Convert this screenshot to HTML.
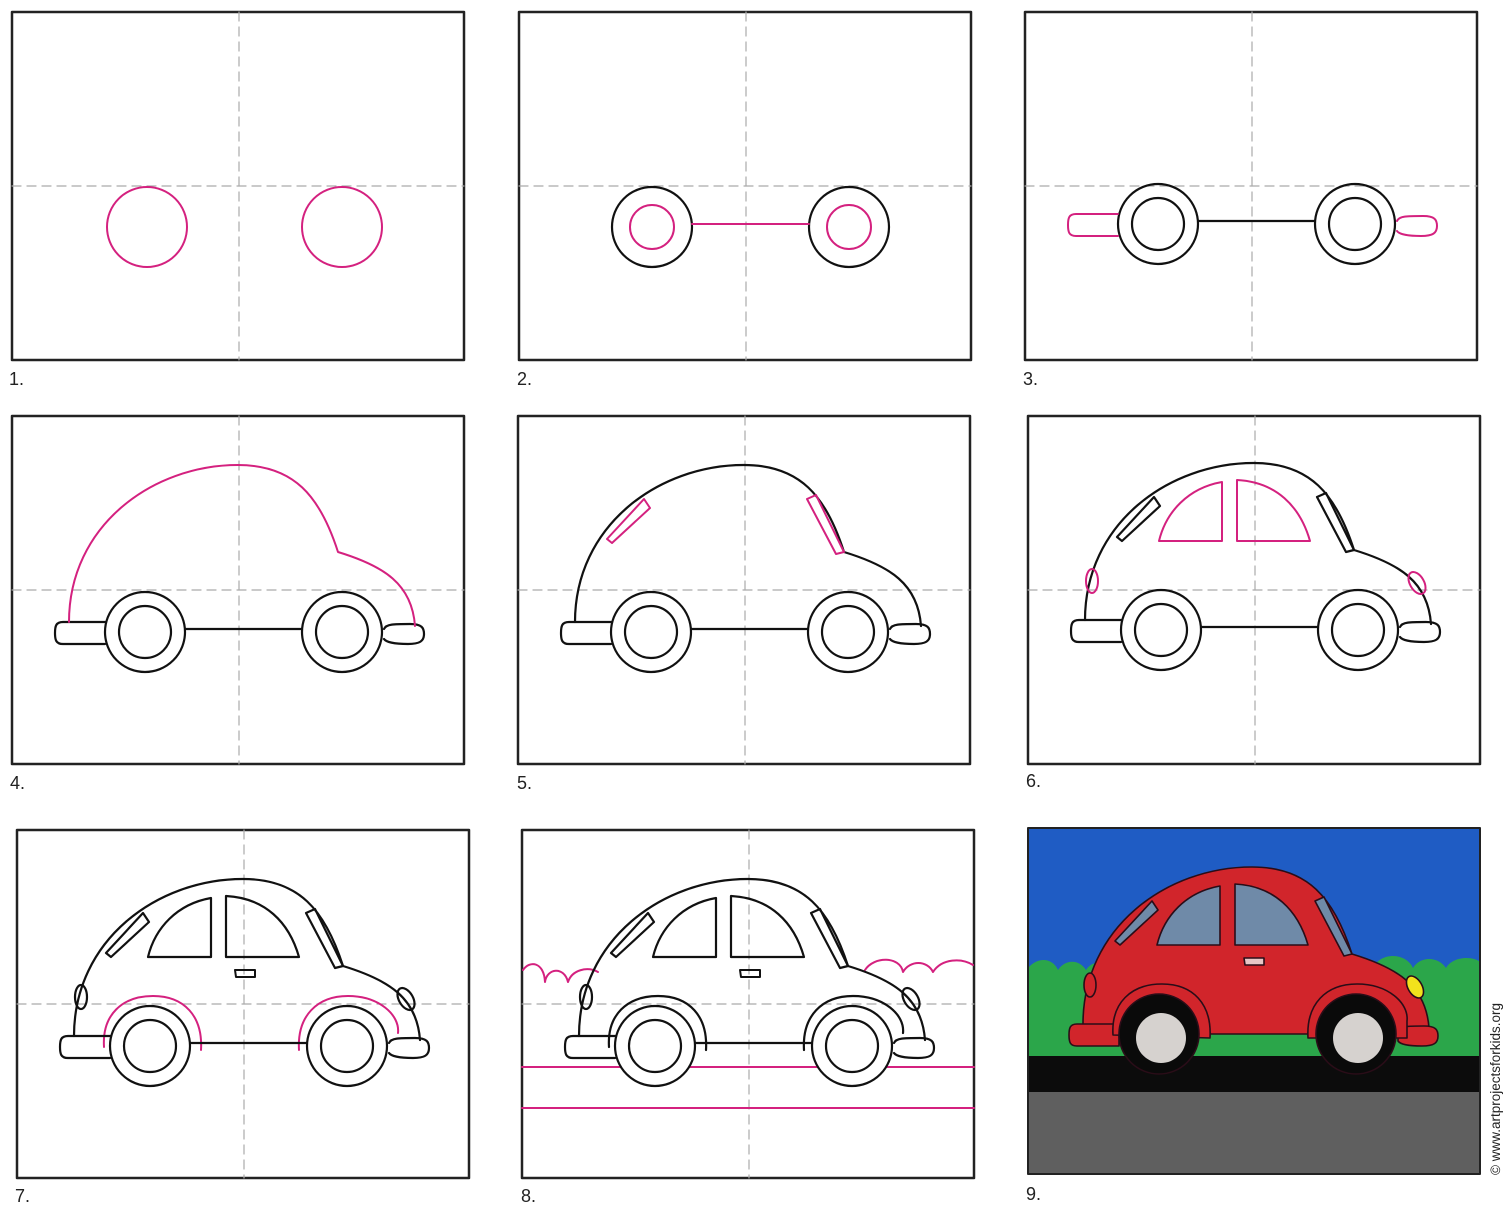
<!DOCTYPE html>
<html><head><meta charset="utf-8"><style>
html,body{margin:0;padding:0;background:#fff;}
svg{display:block;}
text{font-family:"Liberation Sans",sans-serif;}
</style></head><body>
<svg width="1507" height="1213" viewBox="0 0 1507 1213" xmlns="http://www.w3.org/2000/svg">
<defs>
  <g id="frame">
    <rect x="0" y="0" width="452" height="348" fill="#fff" stroke="#222" stroke-width="2.5"/>
    <line x1="227" y1="0" x2="227" y2="348" stroke="#aaa" stroke-width="1.2" stroke-dasharray="9,6"/>
    <line x1="0" y1="174" x2="452" y2="174" stroke="#aaa" stroke-width="1.2" stroke-dasharray="9,6"/>
  </g>
  <g id="outer"><circle cx="133" cy="216" r="40"/><circle cx="330" cy="216" r="40"/></g>
  <g id="inner"><circle cx="133" cy="216" r="26"/><circle cx="330" cy="216" r="26"/></g>
  <g id="inner2"><circle cx="133" cy="216" r="22"/><circle cx="330" cy="216" r="22"/></g>
  <g id="axle"><line x1="173" y1="213" x2="290" y2="213"/></g>
  <g id="bumpers">
    <path d="M93,206 L51,206 C44,206 43,210 43,217 C43,224 44,228 51,228 L93,228"/>
    <path d="M372,213 C374,208 382,208 398,208 C410,208 412,212 412,218 C412,225 408,228 396,228 C382,228 374,226 372,223"/>
  </g>
  <g id="body"><path d="M57,206 C57,110 140,49 226,49 C282,49 308,80 326,136 C372,150 400,168 403,210"/></g>
  <g id="side">
    <polygon points="89,123 126,83 132,92 94,127"/>
    <polygon points="289,83 298,79 326,136 318,138"/>
  </g>
  <g id="main">
    <path d="M131,127 L194,127 L194,68 C160,74 138,98 131,127 Z"/>
    <path d="M209,127 L282,127 C272,92 248,68 209,66 Z"/>
  </g>
  <g id="lights">
    <ellipse cx="64" cy="167" rx="6" ry="12"/>
    <ellipse cx="389" cy="169" rx="7" ry="12" transform="rotate(-30 389 169)"/>
  </g>
  <g id="fenders">
    <path d="M87,217 C85,185 105,166 136,166 C167,166 186,186 184,220"/>
    <path d="M282,220 C280,186 300,166 331,166 C362,166 383,185 381,203"/>
  </g>
  <g id="handle"><polygon points="218,140 238,140 238,147 219,147"/></g>
</defs>

<g fill="none" stroke-linecap="round" stroke-linejoin="round">
<g transform="translate(12,12)">
  <use href="#frame"/>
  <g stroke="#d4217f" stroke-width="2"><circle cx="135" cy="215" r="40"/><circle cx="330" cy="215" r="40"/></g>
</g>
<g transform="translate(519,12)">
  <use href="#frame"/>
  <use href="#outer" stroke="#111" stroke-width="2.2" y="-1"/>
  <use href="#inner2" stroke="#d4217f" stroke-width="2" y="-1"/>
  <line x1="173" y1="212" x2="290" y2="212" stroke="#d4217f" stroke-width="2"/>
</g>
<g transform="translate(1025,12)">
  <use href="#frame"/>
  <g transform="translate(0,-4)">
  <use href="#outer" stroke="#111" stroke-width="2.2"/>
  <use href="#inner" stroke="#111" stroke-width="2.2"/>
  <use href="#axle" stroke="#111" stroke-width="2.2"/>
  <use href="#bumpers" stroke="#d4217f" stroke-width="2"/>
  </g>
</g>
<g transform="translate(12,416)">
  <use href="#frame"/>
  <use href="#outer" stroke="#111" stroke-width="2.2"/>
  <use href="#inner" stroke="#111" stroke-width="2.2"/>
  <use href="#axle" stroke="#111" stroke-width="2.2"/>
  <use href="#bumpers" stroke="#111" stroke-width="2.2"/>
  <use href="#body" stroke="#d4217f" stroke-width="2"/>
</g>
<g transform="translate(518,416)">
  <use href="#frame"/>
  <use href="#outer" stroke="#111" stroke-width="2.2"/>
  <use href="#inner" stroke="#111" stroke-width="2.2"/>
  <use href="#axle" stroke="#111" stroke-width="2.2"/>
  <use href="#bumpers" stroke="#111" stroke-width="2.2"/>
  <use href="#body" stroke="#111" stroke-width="2.2"/>
  <use href="#side" stroke="#d4217f" stroke-width="2"/>
</g>
<g transform="translate(1028,416)">
  <use href="#frame"/>
  <g transform="translate(0,-2)">
  <use href="#outer" stroke="#111" stroke-width="2.2"/>
  <use href="#inner" stroke="#111" stroke-width="2.2"/>
  <use href="#axle" stroke="#111" stroke-width="2.2"/>
  <use href="#bumpers" stroke="#111" stroke-width="2.2"/>
  <use href="#body" stroke="#111" stroke-width="2.2"/>
  <use href="#side" stroke="#111" stroke-width="2.2"/>
  <use href="#main" stroke="#d4217f" stroke-width="2"/>
  <use href="#lights" stroke="#d4217f" stroke-width="2"/>
  </g>
</g>
<g transform="translate(17,830)">
  <use href="#frame"/>
  <use href="#fenders" stroke="#d4217f" stroke-width="2"/>
  <use href="#outer" stroke="#111" stroke-width="2.2" fill="#fff"/>
  <use href="#inner" stroke="#111" stroke-width="2.2"/>
  <use href="#axle" stroke="#111" stroke-width="2.2"/>
  <use href="#bumpers" stroke="#111" stroke-width="2.2"/>
  <use href="#body" stroke="#111" stroke-width="2.2"/>
  <use href="#side" stroke="#111" stroke-width="2.2"/>
  <use href="#main" stroke="#111" stroke-width="2.2"/>
  <use href="#lights" stroke="#111" stroke-width="2.2"/>
  <use href="#handle" stroke="#111" stroke-width="2"/>
</g>
<g transform="translate(522,830)">
  <use href="#frame"/>
  <g stroke="#d4217f" stroke-width="2">
    <path d="M1,140 C8,130 22,132 23,152 C25,138 42,136 46,152 C50,140 65,136 76,142"/>
    <path d="M343,140 C352,126 378,126 381,142 C388,130 405,130 411,142 C420,128 440,128 451,135"/>
    <line x1="0" y1="237" x2="452" y2="237"/>
    <line x1="0" y1="278" x2="452" y2="278"/>
  </g>
  <use href="#fenders" stroke="#111" stroke-width="2.2"/>
  <use href="#outer" stroke="#111" stroke-width="2.2" fill="#fff"/>
  <use href="#inner" stroke="#111" stroke-width="2.2"/>
  <use href="#axle" stroke="#111" stroke-width="2.2"/>
  <use href="#bumpers" stroke="#111" stroke-width="2.2"/>
  <use href="#body" stroke="#111" stroke-width="2.2"/>
  <use href="#side" stroke="#111" stroke-width="2.2"/>
  <use href="#main" stroke="#111" stroke-width="2.2"/>
  <use href="#lights" stroke="#111" stroke-width="2.2"/>
  <use href="#handle" stroke="#111" stroke-width="2"/>
</g>
<g transform="translate(1028,828)">
  <rect x="0" y="0" width="452" height="346" fill="#1f5cc4"/>
  <path d="M0,140 C10,128 25,130 30,142 C38,130 52,132 58,142 C64,132 78,132 90,140 L90,240 L0,240 Z" fill="#2ba64a"/>
  <rect x="0" y="175" width="452" height="60" fill="#2ba64a"/>
  <path d="M345,140 C352,124 378,124 385,140 C392,128 410,128 418,140 C425,128 445,128 452,134 L452,240 L345,240 Z" fill="#2ba64a"/>
  <rect x="0" y="228" width="452" height="36" fill="#0c0c0c"/>
  <rect x="0" y="264" width="452" height="82" fill="#5f5f5f"/>
  <g transform="translate(-2,-10)" stroke="#2a0d18" stroke-width="1.6">
    <path d="M57,206 C57,110 140,49 226,49 C282,49 308,80 326,136 C372,150 400,168 403,210 L403,216 L57,216 Z" fill="#d1252b"/>
    <path d="M93,206 L51,206 C44,206 43,210 43,217 C43,224 44,228 51,228 L93,228 Z" fill="#d1252b"/>
    <path d="M372,213 C374,208 382,208 398,208 C410,208 412,212 412,218 C412,225 408,228 396,228 C382,228 374,226 372,223 Z" fill="#d1252b"/>
    <path d="M87,217 C85,185 105,166 136,166 C167,166 186,186 184,220 Z" fill="#d1252b"/>
    <path d="M282,220 C280,186 300,166 331,166 C362,166 383,185 381,203 L381,220 Z" fill="#d1252b"/>
    <use href="#side" fill="#6f8aa8"/>
    <use href="#main" fill="#6f8aa8"/>
    <ellipse cx="64" cy="167" rx="6" ry="12" fill="#d1252b"/>
    <ellipse cx="389" cy="169" rx="7" ry="12" transform="rotate(-30 389 169)" fill="#f2e21c"/>
    <polygon points="218,140 238,140 238,147 219,147" fill="#e8c6c6"/>
    <circle cx="133" cy="216" r="40" fill="#0a0a0a"/>
    <circle cx="330" cy="216" r="40" fill="#0a0a0a"/>
    <circle cx="135" cy="220" r="25" fill="#d6d2cf" stroke="none"/>
    <circle cx="332" cy="220" r="25" fill="#d6d2cf" stroke="none"/>
  </g>
  <rect x="0" y="0" width="452" height="346" fill="none" stroke="#222" stroke-width="2"/>
</g>
</g>

<g fill="#222" font-size="18">
  <text x="9" y="385">1.</text>
  <text x="517" y="385">2.</text>
  <text x="1023" y="385">3.</text>
  <text x="10" y="789">4.</text>
  <text x="517" y="789">5.</text>
  <text x="1026" y="787">6.</text>
  <text x="15" y="1202">7.</text>
  <text x="521" y="1202">8.</text>
  <text x="1026" y="1200">9.</text>
</g>
<text transform="translate(1500,1175) rotate(-90)" font-size="13.5" fill="#222">© www.artprojectsforkids.org</text>
</svg>
</body></html>
